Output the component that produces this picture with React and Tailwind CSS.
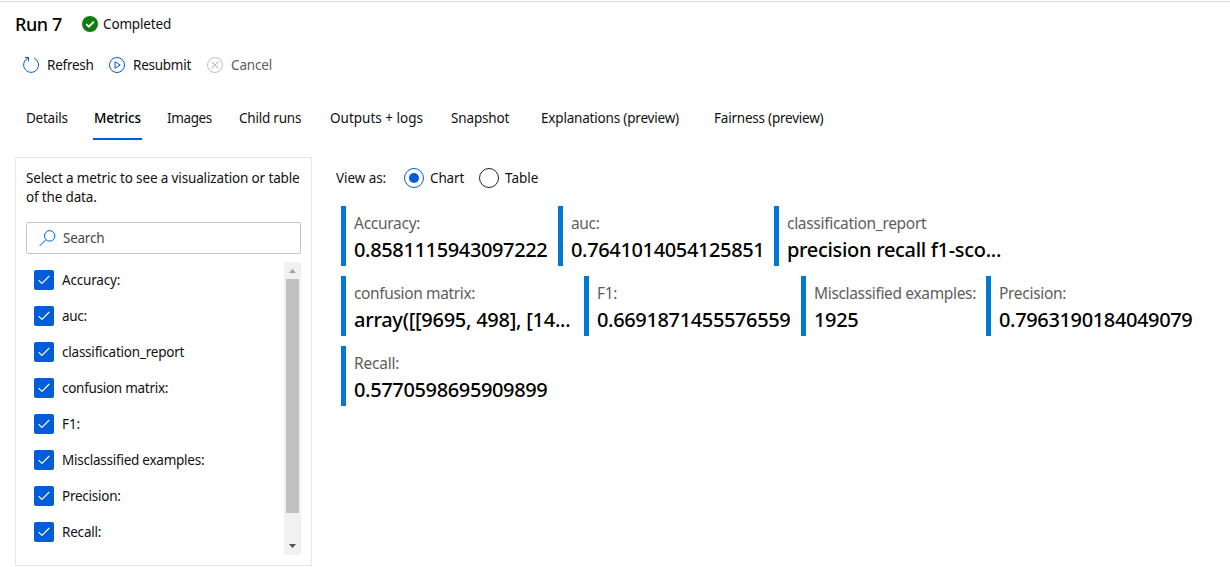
const tabs = [
  { label: "Details", box: "w-[68px]", text: "tracking-[-0.25px]" },
  { label: "Metrics", box: "w-[73px]", text: "tracking-[-0.15px]", active: true },
  { label: "Images", box: "w-[72px]", text: "tracking-[-0.38px]" },
  { label: "Child runs", box: "w-[91px]", text: "tracking-[-0.22px]" },
  { label: "Outputs + logs", box: "w-[121px]", text: "tracking-[0.01px]" },
  { label: "Snapshot", box: "w-[90px]", text: "tracking-[-0.15px]" },
  { label: "Explanations (preview)", box: "w-[173px]", text: "tracking-[-0.19px]" },
  { label: "Fairness (preview)", box: "w-[120px]", text: "tracking-[-0.22px]" },
];

const metrics = [
  { label: "Accuracy:", text: "tracking-[-0.18px]" },
  { label: "auc:", text: "tracking-[-0.3px]" },
  { label: "classification_report", text: "tracking-[-0.22px]" },
  { label: "confusion matrix:", text: "tracking-[-0.28px]" },
  { label: "F1:", text: "tracking-[-0.1px]" },
  { label: "Misclassified examples:", text: "tracking-[-0.24px]" },
  { label: "Precision:", text: "tracking-[-0.24px]" },
  { label: "Recall:", text: "tracking-[-0.2px]" },
];

const cardRows = [
  [
    { label: "Accuracy:", value: "0.8581115943097222", box: "w-[217px]", text: "tracking-[-0.27px]", num: "tracking-[-0.36px]" },
    { label: "auc:", value: "0.7641014054125851", box: "w-[216px]", text: "tracking-[-0.35px]", num: "tracking-[-0.36px]" },
    { label: "classification_report", value: "precision recall f1-sco...", box: "w-[240px]", text: "tracking-[-0.3px]", num: "tracking-[-0.31px]" },
  ],
  [
    { label: "confusion matrix:", value: "array([[9695, 498], [14...", box: "w-[243px]", text: "tracking-[-0.36px]", num: "tracking-[-0.26px]" },
    { label: "F1:", value: "0.6691871455576559", box: "w-[217px]", text: "tracking-[-0.3px]", num: "tracking-[-0.36px]" },
    { label: "Misclassified examples:", value: "1925", box: "w-[185px]", text: "tracking-[-0.34px]", num: "tracking-[-0.36px]" },
    { label: "Precision:", value: "0.7963190184049079", box: "w-[217px]", text: "tracking-[-0.3px]", num: "tracking-[-0.36px]" },
  ],
  [{ label: "Recall:", value: "0.5770598695909899", box: "w-[217px]", text: "tracking-[-0.22px]", num: "tracking-[-0.36px]" }],
];

function CompletedIcon() {
  return (
    <svg width="16" height="16" viewBox="0 0 16 16">
      <circle cx="8" cy="8" r="8" fill="#107c10" />
      <path d="M4.2 8.1 6.9 10.7 11.9 5.6" fill="none" stroke="#fff" strokeWidth="1.9" />
    </svg>
  );
}

function RefreshIcon() {
  return (
    <svg width="16" height="16" viewBox="0 0 16 16" fill="none" stroke="#015cda" strokeWidth="1">
      <path d="M11.2 1.1A7.5 7.5 0 1 1 5.2 1L5.2.7" />
      <path d="M2 .5H5.5V4.2" />
    </svg>
  );
}

function ResubmitIcon() {
  return (
    <svg width="16" height="16" viewBox="0 0 16 16" fill="none" stroke="#015cda" strokeWidth="1">
      <circle cx="8" cy="8" r="7.5" />
      <path d="M6 4.7 11.2 8 6 11.3Z" />
    </svg>
  );
}

function CancelIcon() {
  return (
    <svg width="16" height="16" viewBox="0 0 16 16" fill="none" stroke="#c2c0be" strokeWidth="1">
      <circle cx="8" cy="8" r="7.5" />
      <path d="M4.6 4.6 11.4 11.4M11.4 4.6 4.6 11.4" strokeWidth="1.2" />
    </svg>
  );
}

function SearchIcon() {
  return (
    <svg width="17" height="17" viewBox="0 0 17 17" fill="none" stroke="#015cda" strokeWidth="1">
      <circle cx="10.7" cy="5.9" r="5.2" />
      <path d="M7 9.6.5 16.1" />
    </svg>
  );
}

function Checkbox() {
  return (
    <span className="flex h-5 w-5 shrink-0 items-center justify-center rounded-[2px] bg-[#015cda]">
      <svg width="12" height="10" viewBox="0 0 12 10" fill="none" stroke="#fff" strokeWidth="1.1">
        <path d="M.6 5.2 3.9 8.4 11.3 1" />
      </svg>
    </span>
  );
}

function Sidebar() {
  return (
    <aside className="flex h-[409px] w-[297px] shrink-0 flex-col border border-[#e6e6e6] px-[10px] pt-[11px]">
      <p className="h-[38px] leading-[19px] whitespace-nowrap">
        <span className="tracking-[-0.14px]">Select a metric to see a visualization or table</span>
        <br />
        <span className="tracking-[-0.16px]">of the data.</span>
      </p>
      <div className="mt-[15px] flex h-8 w-[275px] items-center rounded-[2px] border border-[#c8c6c4] pl-[12px]">
        <SearchIcon />
        <span className="ml-[7px] text-[#484644] tracking-[-0.25px]">Search</span>
      </div>
      <div className="mt-[8px] flex h-[293px] w-[275px] justify-between">
        <ul className="flex flex-col pl-[8px]">
          {metrics.map((m) => (
            <li key={m.label} className="flex h-9 items-center gap-2">
              <Checkbox />
              <span className={`whitespace-nowrap ${m.text}`}>{m.label}</span>
            </li>
          ))}
        </ul>
        <div className="flex w-[17px] flex-col items-center bg-[#f1f1f1]">
          <svg width="17" height="17" viewBox="0 0 17 17">
            <path d="M5 11 8.5 7 12 11Z" fill="#a3a3a3" />
          </svg>
          <div className="h-[234px] w-[13px] bg-[#c1c1c1]" />
          <svg className="mt-auto" width="17" height="17" viewBox="0 0 17 17">
            <path d="M5 6 12 6 8.5 10Z" fill="#505050" />
          </svg>
        </div>
      </div>
    </aside>
  );
}

function MetricCard({ card }) {
  return (
    <div className={`h-[60px] shrink-0 border-l-[5px] border-[#0078d4] pl-2 whitespace-nowrap ${card.box}`}>
      <div className={`pt-[7px] text-[15.5px] leading-[21px] text-[#605e5c] ${card.text}`}>{card.label}</div>
      <div className={`pt-[3px] text-[20px] leading-[26px] font-medium text-black ${card.num}`}>{card.value}</div>
    </div>
  );
}

export default function App() {
  return (
    <div className="h-[567px] w-[1230px] overflow-hidden bg-white pt-px font-['Noto_Sans','Open_Sans',sans-serif] text-[13.5px] leading-5 text-[#111]">
      <div className="h-px bg-[#dcdcdc]" />
      <header className="flex h-[44px] items-center pl-[15px]">
        <h1 className="w-[67px] text-[18px] font-medium whitespace-nowrap tracking-[-0.4px] text-black">Run 7</h1>
        <CompletedIcon />
        <span className="ml-[5px] tracking-[-0.15px]">Completed</span>
      </header>
      <div className="flex h-[38px] items-center pl-[23px] whitespace-nowrap">
        <RefreshIcon />
        <span className="ml-[8px] w-[62px] tracking-[-0.25px]">Refresh</span>
        <ResubmitIcon />
        <span className="ml-[8px] w-[74px] tracking-[-0.25px]">Resubmit</span>
        <CancelIcon />
        <span className="ml-[8px] tracking-[-0.15px] text-[#605e5c]">Cancel</span>
      </div>
      <nav className="mt-[13px] flex h-[43px] pl-[25px] whitespace-nowrap">
        {tabs.map((t) => (
          <div key={t.label} className={`shrink-0 ${t.box}`}>
            <span
              className={`inline-block h-[43px] px-px leading-[42px] ${t.text} ${
                t.active ? "w-[49px] border-b-2 border-[#015cda] font-medium text-black" : ""
              }`}
            >
              {t.label}
            </span>
          </div>
        ))}
      </nav>
      <div className="mt-[17px] flex pl-[15px]">
        <Sidebar />
        <main className="flex flex-col pl-[24px]">
          <div className="flex h-[42px] items-center whitespace-nowrap">
            <span className="w-[68px] tracking-[-0.08px]">View as:</span>
            <span className="flex h-5 w-5 items-center justify-center rounded-full border border-[#015cda]">
              <span className="h-[10px] w-[10px] rounded-full bg-[#015cda]" />
            </span>
            <span className="ml-[6px] w-[49px] tracking-[-0.15px]">Chart</span>
            <span className="h-5 w-5 rounded-full border border-[#222]" />
            <span className="ml-[6px]">Table</span>
          </div>
          <div className="mt-[7px] flex flex-col gap-[10px] pl-[5px]">
            {cardRows.map((row) => (
              <div key={row[0].label} className="flex">
                {row.map((c) => (
                  <MetricCard key={c.label} card={c} />
                ))}
              </div>
            ))}
          </div>
        </main>
      </div>
    </div>
  );
}
